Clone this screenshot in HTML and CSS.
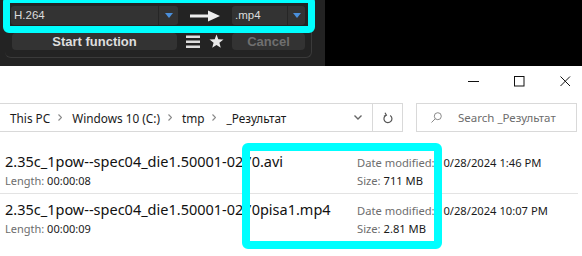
FILE: index.html
```html
<!DOCTYPE html>
<html>
<head>
<meta charset="utf-8">
<link rel="stylesheet" href="styles.css">
</head>
<body>
<div class="app">
  <div class="panel">
    <div class="frame">
      <div class="row1">
        <div class="dd dd1"><span class="dd-text">H.264</span><span class="dd-btn"><i class="tri"></i></span></div>
        <svg class="arrow" width="30" height="12" viewBox="0 0 30 12"><rect x="0" y="4.5" width="19" height="3" fill="#eee"/><polygon points="18,0.5 30,6 18,11.5" fill="#eee"/></svg>
        <div class="dd dd2"><span class="dd-text">.mp4</span><span class="dd-btn"><i class="tri"></i></span></div>
      </div>
      <div class="row2">
        <button class="btn start">Start function</button>
        <svg class="burger" width="14" height="17" viewBox="0 0 14 17"><rect x="0" y="2.5" width="14" height="2.5" fill="#ddd"/><rect x="0" y="7.5" width="14" height="2.5" fill="#ddd"/><rect x="0" y="12.5" width="14" height="2.5" fill="#ddd"/></svg>
        <svg class="star" width="15" height="17" viewBox="0 0 15 17"><polygon points="7.5,1.5 9.3,6.3 14.5,6.5 10.4,9.7 11.8,14.8 7.5,11.9 3.2,14.8 4.6,9.7 0.5,6.5 5.7,6.3" fill="#e8e8e8"/></svg>
        <button class="btn cancel">Cancel</button>
      </div>
    </div>
    <div class="hl hl1"></div>
  </div>
</div>
<div class="explorer">
  <div class="titlebar">
    <div class="wbtn"><svg width="11" height="11" viewBox="0 0 11 11"><line x1="0" y1="5.5" x2="11" y2="5.5" stroke="#111" stroke-width="1"/></svg></div>
    <div class="wbtn"><svg width="11" height="11" viewBox="0 0 11 11"><rect x="0.5" y="0.5" width="9.5" height="9.5" fill="none" stroke="#111" stroke-width="1"/></svg></div>
    <div class="wbtn"><svg width="11" height="11" viewBox="0 0 11 11"><path d="M0.5 0.5 L10 10 M10 0.5 L0.5 10" stroke="#111" stroke-width="1" fill="none"/></svg></div>
  </div>
  <div class="addr-row">
    <div class="addr">
      <div class="crumbs">
        <span>This PC</span>
        <svg class="sep-chev" width="4" height="7" viewBox="0 0 4 7"><polyline points="0.5,0.5 3.5,3.5 0.5,6.5" fill="none" stroke="#8a8a8a" stroke-width="1.2"/></svg>
        <span>Windows 10 (C:)</span>
        <svg class="sep-chev" width="4" height="7" viewBox="0 0 4 7"><polyline points="0.5,0.5 3.5,3.5 0.5,6.5" fill="none" stroke="#8a8a8a" stroke-width="1.2"/></svg>
        <span>tmp</span>
        <svg class="sep-chev" width="4" height="7" viewBox="0 0 4 7"><polyline points="0.5,0.5 3.5,3.5 0.5,6.5" fill="none" stroke="#8a8a8a" stroke-width="1.2"/></svg>
        <span>_Результат</span>
      </div>
      <div class="ddchev"><svg width="8" height="5" viewBox="0 0 8 5"><polyline points="0.5,0.5 4,4 7.5,0.5" fill="none" stroke="#666" stroke-width="1.4"/></svg></div>
      <div class="refresh"><svg width="10" height="12" viewBox="0 0 10 12"><path d="M3 3.2 A4 4 0 1 0 7.2 3.4" fill="none" stroke="#555" stroke-width="1.2"/><polyline points="2,0.8 3.4,3.2 0.9,4.2" fill="none" stroke="#555" stroke-width="1.2"/></svg></div>
    </div>
    <div class="search">
      <svg class="sicon" width="11" height="11" viewBox="0 0 11 11"><circle cx="6.8" cy="4.2" r="3.5" fill="none" stroke="#8a8a8a" stroke-width="1"/><line x1="4.3" y1="6.7" x2="0.5" y2="10.5" stroke="#8a8a8a" stroke-width="1"/></svg>
      <span>Search _Результат</span>
    </div>
  </div>
  <div class="list">
    <div class="item">
      <div class="name">2.35c_1pow--spec04_die1.50001-0270.avi</div>
      <div class="label">Date modified:</div>
      <div class="value">10/28/2024 1:46 PM</div>
      <div class="length"><span class="lbl">Length:</span> 00:00:08</div>
      <div class="sizeline"><span class="lbl">Size:</span> 711 MB</div>
    </div>
    <div class="sep"></div>
    <div class="item">
      <div class="name">2.35c_1pow--spec04_die1.50001-0270pisa1.mp4</div>
      <div class="label">Date modified:</div>
      <div class="value">10/28/2024 10:07 PM</div>
      <div class="length"><span class="lbl">Length:</span> 00:00:09</div>
      <div class="sizeline"><span class="lbl">Size:</span> 2.81 MB</div>
    </div>
  </div>
  <div class="hl hl2"></div>
</div>
</body>
</html>
```
FILE: styles.css
```css
* { box-sizing: border-box; }
html, body { margin: 0; padding: 0; }
body {
  width: 582px;
  height: 256px;
  overflow: hidden;
  background: #fff;
  font-family: "Noto Sans", sans-serif;
}

/* dark app strip */
.app {
  height: 66px;
  background: #000;
  display: flex;
}
.panel {
  position: relative;
  width: 325px;
  background: #232323;
}
.frame {
  margin-left: 5px;
  width: 307px;
  height: 58px;
  border-right: 1px solid #3a3a3a;
  border-bottom: 1px solid #3a3a3a;
  border-bottom-left-radius: 6px;
  border-bottom-right-radius: 6px;
  padding: 6px 0 0 6px;
  display: flex;
  flex-direction: column;
  gap: 8px;
  font-family: "Liberation Sans", sans-serif;
}
.row1, .row2 {
  display: flex;
  align-items: center;
}
.row1 { height: 19px; }
.row2 { height: 17px; }
.dd {
  display: flex;
  height: 19px;
  background: #333;
  border-radius: 3px;
  color: #dcdcdc;
  font-size: 11.5px;
}
.dd1 { width: 167px; }
.dd2 { width: 73px; margin-left: 12px; }
.dd-text {
  flex: 1;
  padding-left: 3px;
  line-height: 19px;
}
.dd-btn {
  width: 20px;
  border-left: 1px solid #262626;
  display: flex;
  align-items: center;
  justify-content: center;
}
.dd2 .dd-btn { width: 18px; }
.tri {
  width: 0;
  height: 0;
  border-left: 4.5px solid transparent;
  border-right: 4.5px solid transparent;
  border-top: 5px solid #4a8fdb;
}
.arrow { margin-left: 12px; display: block; }

.btn {
  height: 17px;
  background: #333;
  border: 0;
  border-radius: 4px;
  font-family: "Liberation Sans", sans-serif;
  font-weight: bold;
  font-size: 13px;
  color: #dedede;
  padding: 0;
  line-height: 17px;
}
.start { width: 165px; margin-left: 1px; }
.burger { margin-left: 9px; display: block; }
.star { margin-left: 9px; display: block; }
.cancel { width: 73px; margin-left: 8px; color: #6f6f6f; }

.hl {
  position: absolute;
  border-style: solid;
  border-color: #00ffff;
}
.hl1 {
  left: 3px;
  top: -4px;
  width: 312px;
  height: 37px;
  border-width: 7px;
  border-radius: 6px;
}

/* explorer */
.explorer {
  position: relative;
  height: 190px;
  background: #fff;
  color: #1a1a1a;
}
.titlebar {
  height: 37px;
  display: flex;
  justify-content: flex-end;
  margin-right: -6px;
}
.wbtn {
  width: 46px;
  height: 31px;
  display: flex;
  align-items: center;
  justify-content: center;
}
.wbtn svg { display: block; }

.addr-row {
  display: flex;
  height: 29px;
  gap: 13px;
  margin-left: -1px;
}
.addr {
  width: 404px;
  border: 1px solid #d9d9d9;
  display: flex;
  align-items: center;
}
.crumbs {
  flex: 1;
  padding-left: 10px;
  display: flex;
  align-items: center;
  font-size: 11.8px;
  color: #1a1a1a;
  white-space: nowrap;
}
.sep-chev { margin: 0 10px 0 8px; display: block; }
.ddchev {
  width: 28px;
  height: 100%;
  display: flex;
  align-items: center;
  justify-content: center;
}
.ddchev svg, .refresh svg, .sicon { display: block; }
.refresh {
  width: 30px;
  height: 100%;
  border-left: 1px solid #d9d9d9;
  display: flex;
  align-items: center;
  justify-content: center;
}
.search {
  width: 161px;
  border: 1px solid #d9d9d9;
  display: flex;
  align-items: center;
  padding-left: 14px;
  gap: 16px;
  color: #6d6d6d;
  font-size: 11.5px;
  white-space: nowrap;
}

.list { padding-top: 14px; }
.item {
  display: grid;
  grid-template-columns: 352px 80px auto;
  grid-template-rows: 18px 18px;
  padding: 7px 0 4px 5px;
  align-items: center;
  white-space: nowrap;
}
.name {
  font-size: 14.5px;
  color: #111;
  margin-top: -3px;
}
.label {
  font-size: 11.2px;
  color: #6d6d6d;
}
.value {
  font-size: 11.2px;
  color: #1a1a1a;
}
.length {
  font-size: 11px;
  color: #1a1a1a;
}
.sizeline {
  grid-column: 2 / 4;
  font-size: 11.2px;
  color: #1a1a1a;
}
.lbl { color: #6d6d6d; }
.sep {
  height: 1px;
  width: 578px;
  background: #e3e3e3;
}
.hl2 {
  left: 242px;
  top: 77px;
  width: 200px;
  height: 106px;
  border-width: 8px;
  border-radius: 6px;
}
```
